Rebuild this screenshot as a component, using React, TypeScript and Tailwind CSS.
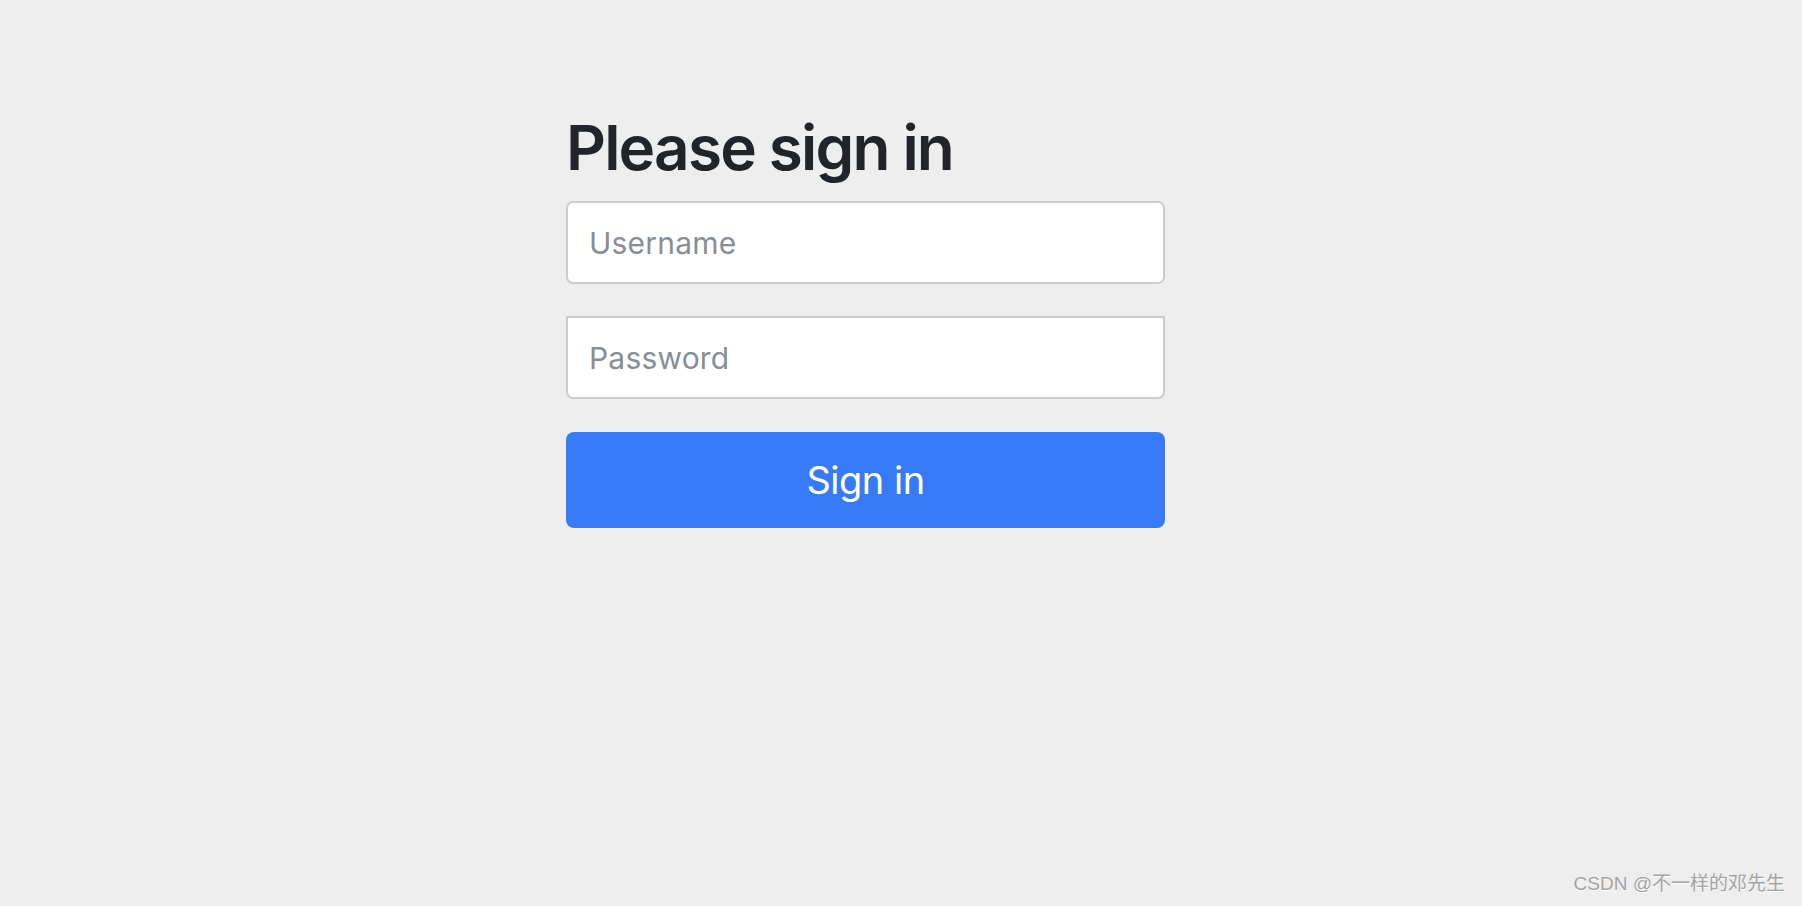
import React from "react";

export default function App() {
  return (
    <div
      className="relative w-full h-[906px] bg-[#eeeeee] overflow-hidden"
      style={{ fontFamily: "Inter, 'Noto Sans', sans-serif" }}
    >
      <form className="flex flex-col w-[599px] ml-[566px] pt-[111px]" onSubmit={(e) => e.preventDefault()}>
        <h2 className="text-[62px] font-semibold leading-[1.2] text-[#212529] tracking-[-1.8px] mb-[16px]">
          Please sign in
        </h2>
        <input
          type="text"
          placeholder="Username"
          className="h-[83px] w-full bg-white border-2 border-[#cccccc] rounded-[7px] px-[21px] text-[30px] tracking-[0.2px] text-[#495057] placeholder:text-[#868e96] outline-none"
        />
        <input
          type="password"
          placeholder="Password"
          className="mt-[32px] h-[83px] w-full bg-white border-2 border-[#cccccc] rounded-b-[7px] px-[21px] text-[30px] tracking-[0.2px] text-[#495057] placeholder:text-[#868e96] outline-none"
        />
        <button
          type="submit"
          className="mt-[33px] h-[96px] w-full rounded-[8px] bg-[#377af6] text-white text-[38px] tracking-[-0.5px] leading-none"
        >
          Sign in
        </button>
      </form>
      <div
        className="absolute right-[17px] bottom-[8px] text-[19px] text-[#a3a3a3]"
        style={{
          fontFamily: "'Liberation Sans', 'Noto Sans CJK SC', sans-serif",
          textShadow: "0 1px 0 #ffffff",
        }}
      >
        CSDN @不一样的邓先生
      </div>
    </div>
  );
}
